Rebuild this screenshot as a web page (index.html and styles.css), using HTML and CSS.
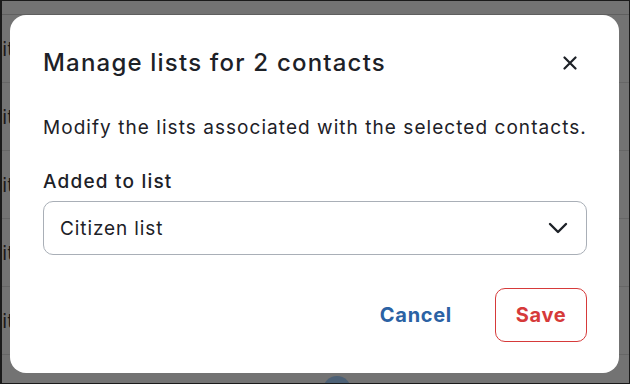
FILE: index.html
```html
<!DOCTYPE html>
<html lang="en">

  <head>
    <meta charset="UTF-8">
    <meta name="viewport" content="width=device-width, initial-scale=1.0">
    <title>Manage lists</title>
    <link rel="stylesheet" href="styles.css">
  </head>

  <body>
    <div id="page">
      <div class="table-head"></div>
      <div class="table-row"><span class="cell">it</span></div>
      <div class="table-row"><span class="cell">it</span></div>
      <div class="table-row"><span class="cell">it</span></div>
      <div class="table-row"><span class="cell">it</span></div>
      <div class="table-row"><span class="cell">it</span></div>
      <div class="table-row"></div>
      <div class="fab"></div>

      <div id="dialog">
        <div class="dialog-header">
          <h1 class="dialog-title">Manage lists for 2 contacts</h1>
          <button class="close-btn" aria-label="Close">
            <svg width="14" height="14" viewBox="0 0 14 14">
              <path d="M1.5 1.5 L12.5 12.5 M12.5 1.5 L1.5 12.5" stroke="#1d2127" stroke-width="2.2" stroke-linecap="round" fill="none"/>
            </svg>
          </button>
        </div>
        <p class="dialog-text">Modify the lists associated with the selected contacts.</p>
        <label class="field-label">Added to list</label>
        <div class="select">
          <span>Citizen list</span>
          <svg width="20" height="12" viewBox="0 0 20 12">
            <path d="M2 2 L10 10 L18 2" stroke="#1d2127" stroke-width="2.4" stroke-linecap="round" stroke-linejoin="round" fill="none"/>
          </svg>
        </div>
        <div class="dialog-actions">
          <button class="btn btn-cancel">Cancel</button>
          <button class="btn btn-save">Save</button>
        </div>
      </div>
    </div>
  </body>

</html>
```

FILE: styles.css
```css
* {
  box-sizing: border-box;
}

body {
  margin: 0;
  font-family: Inter, "Noto Sans", sans-serif;
  color: #1d2127;
}

#page {
  position: relative;
  width: 630px;
  height: 384px;
  overflow: hidden;
  background-color: #737373;
  border: 1px solid #1a1a1a;
  border-left-width: 2px;
}

.table-head {
  height: 14px;
  border-bottom: 1px solid #5f5f5f;
}

.table-row {
  display: flex;
  align-items: center;
  height: 68px;
  border-bottom: 1px solid #666;
}

.cell {
  font-family: "DejaVu Sans", sans-serif;
  font-size: 19px;
  color: #1a1a1a;
}

.fab {
  position: absolute;
  left: 321px;
  top: 375px;
  width: 28px;
  height: 28px;
  border-radius: 50%;
  background-color: #4d6176;
}

#dialog {
  position: absolute;
  left: 8px;
  top: 14px;
  width: 609px;
  height: 358px;
  padding: 28px 32px 0 33px;
  background-color: #fff;
  border-radius: 16px;
}

.dialog-header {
  display: flex;
  justify-content: space-between;
  align-items: center;
}

.dialog-title {
  margin: 0;
  font-size: 24px;
  font-weight: 500;
  line-height: 40px;
  letter-spacing: 1.2px;
}

.close-btn {
  display: flex;
  margin-right: 10px;
  padding: 0;
  border: none;
  background: none;
}

.dialog-text {
  margin: 31px 0 0;
  font-size: 19px;
  line-height: 28px;
  letter-spacing: 1.05px;
}

.field-label {
  display: block;
  margin-top: 26px;
  font-size: 19px;
  font-weight: 500;
  line-height: 28px;
  letter-spacing: 1.2px;
}

.select {
  display: flex;
  justify-content: space-between;
  align-items: center;
  height: 54px;
  margin-top: 5px;
  padding: 0 18px 0 16px;
  border: 1px solid #a9afb7;
  border-radius: 10px;
  font-size: 19px;
  letter-spacing: 0.9px;
}

.dialog-actions {
  display: flex;
  justify-content: flex-end;
  align-items: center;
  gap: 43px;
  margin-top: 33px;
}

.btn {
  height: 54px;
  padding: 0;
  border: none;
  background: none;
  font-family: inherit;
  font-size: 20px;
  font-weight: 700;
  letter-spacing: 0.7px;
}

.btn-cancel {
  color: #2b62a4;
}

.btn-save {
  width: 92px;
  border: 1px solid #d63a3a;
  border-radius: 10px;
  color: #d63a3a;
}
```
